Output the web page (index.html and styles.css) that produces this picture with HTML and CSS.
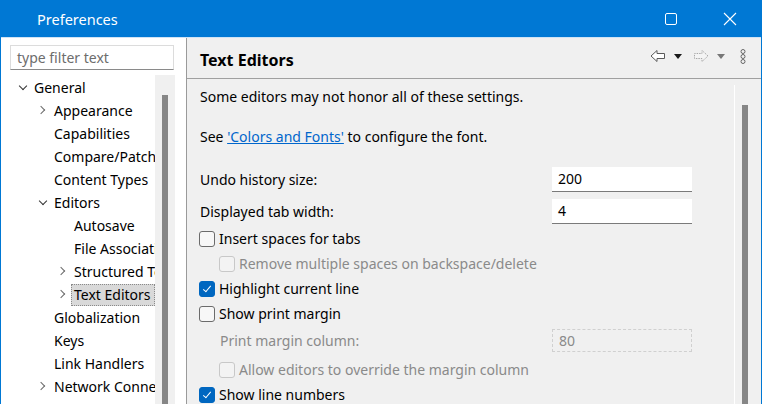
FILE: index.html
```html
<!DOCTYPE html>
<html>
<head>
<meta charset="utf-8">
<link rel="stylesheet" href="styles.css">
</head>
<body>
<div class="window">
  <div class="titlebar">
    <span class="title">Preferences</span>
    <div class="winbtns">
      <span class="winbtn"><svg width="12" height="12" viewBox="0 0 12 12"><rect x="0.5" y="0.5" width="11" height="11" rx="1.5" fill="none" stroke="#fff" stroke-width="1"/></svg></span>
      <span class="winbtn"><svg width="14" height="14" viewBox="0 0 14 14"><path d="M1 1L13 13M13 1L1 13" stroke="#fff" stroke-width="1.1" fill="none"/></svg></span>
    </div>
  </div>
  <div class="main">
    <aside class="left">
      <div class="filter">type filter text</div>
      <div class="treewrap">
        <ul class="tree">
          <li class="l0"><span class="tw open"></span>General</li>
          <li class="l1"><span class="tw closed"></span>Appearance</li>
          <li class="l1"><span class="tw"></span>Capabilities</li>
          <li class="l1"><span class="tw"></span>Compare/Patch</li>
          <li class="l1"><span class="tw"></span>Content Types</li>
          <li class="l1"><span class="tw open"></span>Editors</li>
          <li class="l2"><span class="tw"></span>Autosave</li>
          <li class="l2"><span class="tw"></span>File Associations</li>
          <li class="l2"><span class="tw closed"></span>Structured Text Editors</li>
          <li class="l2"><span class="tw closed"></span><span class="sel">Text Editors</span></li>
          <li class="l1"><span class="tw"></span>Globalization</li>
          <li class="l1"><span class="tw"></span>Keys</li>
          <li class="l1"><span class="tw"></span>Link Handlers</li>
          <li class="l1"><span class="tw closed"></span>Network Connections</li>
        </ul>
        <div class="tscroll"><div class="tthumb"></div></div>
      </div>
    </aside>
    <section class="right">
      <header class="phead">
        <h1>Text Editors</h1>
        <div class="nav">
          <svg class="ico" width="16" height="14" viewBox="0 0 16 14"><path d="M1 7L7 1.5V4.5H14.5V9.5H7V12.5Z" fill="#fff" stroke="#5a5a5a" stroke-width="1" stroke-linejoin="round"/></svg>
          <svg class="tri" width="8" height="5" viewBox="0 0 8 5"><path d="M0 0H8L4 5Z" fill="#1a1a1a"/></svg>
          <svg class="ico" width="16" height="14" viewBox="0 0 16 14"><path d="M15 7L9 1.5V4.5H1.5V9.5H9V12.5Z" fill="#f4f4f4" stroke="#a8a8a8" stroke-width="1" stroke-dasharray="1.5 1" stroke-linejoin="round"/></svg>
          <svg class="tri" width="8" height="5" viewBox="0 0 8 5"><path d="M0 0H8L4 5Z" fill="#777"/></svg>
          <svg class="dots" width="6" height="15" viewBox="0 0 6 15"><circle cx="3" cy="2.5" r="2" fill="none" stroke="#666" stroke-width="1"/><circle cx="3" cy="7.5" r="2" fill="none" stroke="#666" stroke-width="1"/><circle cx="3" cy="12.5" r="2" fill="none" stroke="#666" stroke-width="1"/></svg>
        </div>
      </header>
      <div class="pbody">
        <div class="content">
          <p class="line">Some editors may not honor all of these settings.</p>
          <p class="line gap">See <a class="link">'Colors and Fonts'</a> to configure the font.</p>
          <div class="field first"><span>Undo history size:</span><span class="input">200</span></div>
          <div class="field"><span>Displayed tab width:</span><span class="input">4</span></div>
          <div class="cb"><span class="box"></span>Insert spaces for tabs</div>
          <div class="cb sub dis"><span class="box"></span>Remove multiple spaces on backspace/delete</div>
          <div class="cb"><span class="box on"></span>Highlight current line</div>
          <div class="cb"><span class="box"></span>Show print margin</div>
          <div class="field sub dis pm"><span>Print margin column:</span><span class="input off">80</span></div>
          <div class="cb sub dis allow"><span class="box"></span>Allow editors to override the margin column</div>
          <div class="cb"><span class="box on"></span>Show line numbers</div>
        </div>
        <div class="rscroll"><div class="rthumb"></div></div>
      </div>
    </section>
  </div>
</div>
</body>
</html>
```

FILE: styles.css
```css
* { box-sizing: border-box; }
html, body { margin: 0; padding: 0; }
body {
  width: 762px;
  height: 404px;
  overflow: hidden;
  font-family: "Noto Sans", "Open Sans", sans-serif;
  font-size: 14px;
  color: #000;
}
.window {
  width: 762px;
  height: 404px;
  border-left: 1px solid #0078d4;
  border-right: 1px solid #0078d4;
  display: flex;
  flex-direction: column;
  overflow: hidden;
  background: #f0f0f0;
}
.titlebar {
  height: 38px;
  flex: none;
  background: #0078d4;
  display: flex;
  align-items: center;
  justify-content: space-between;
  color: #fff;
  border-bottom: 1px solid #cfe3f5;
}
.title { padding-left: 36px; font-size: 14.5px; }
.winbtns { display: flex; height: 100%; }
.winbtn {
  width: 58px;
  display: flex;
  align-items: center;
  justify-content: center;
}
.winbtn:first-child { padding-right: 2px; }
.winbtn:last-child { width: 60px; padding-right: 2px; }
.main { flex: 1; display: flex; min-height: 0; }
.left {
  width: 186px;
  flex: none;
  background: #fff;
  border-right: 1px solid #9a9a9a;
  padding: 7px 0 0 9px;
  display: flex;
  flex-direction: column;
}
.filter {
  width: 164px;
  height: 25px;
  border: 1px solid #dcdcdc;
  border-bottom: 1px solid #8a8a8a;
  color: #6d6d6d;
  padding-left: 6px;
  line-height: 24px;
}
.treewrap {
  margin-top: 6px;
  margin-left: -9px;
  display: flex;
  flex: 1;
  min-height: 0;
}
.tree {
  list-style: none;
  margin: 0;
  padding: 0;
  width: 154px;
  overflow: hidden;
  white-space: nowrap;
}
.tree li {
  height: 23px;
  line-height: 23px;
  display: flex;
  align-items: center;
}
.tree .l0 { padding-left: 16px; }
.tree .l1 { padding-left: 36px; }
.tree .l2 { padding-left: 56px; }
.tw {
  width: 17px;
  height: 23px;
  flex: none;
  position: relative;
}
.tw.closed::before, .tw.open::before {
  content: "";
  position: absolute;
  width: 5px;
  height: 5px;
  border-right: 1.3px solid #6a6a6a;
  border-bottom: 1.3px solid #6a6a6a;
}
.tw.closed::before { left: 1px; top: 8px; transform: rotate(-45deg); }
.tw.open::before { left: 3px; top: 7px; transform: rotate(45deg); border-color: #333; }
.sel {
  background: #d9d9d9;
  outline: 1px dotted #8a8a8a;
  outline-offset: -1px;
  padding: 0 4px 0 3px;
  margin-left: -3px;
  line-height: 22px;
}
.tscroll {
  width: 20px;
  flex: none;
  background: #f0f0f0;
  padding: 20px 0 0 7px;
  margin-top: -1px;
}
.tthumb { width: 6px; height: 400px; background: #868686; }
.right { flex: 1; display: flex; flex-direction: column; min-width: 0; }
.phead {
  height: 41px;
  flex: none;
  border-bottom: 1px solid #a0a0a0;
  display: flex;
  align-items: center;
  justify-content: space-between;
  padding: 0 15px 0 13px;
}
.phead h1 { margin: 4px 0 0; font-size: 16px; font-weight: 700; }
.nav { display: flex; align-items: center; margin-top: -4px; }
.nav .ico { margin-right: 8px; }
.nav .tri:nth-of-type(2) { margin-right: 11px; }
.nav .tri:nth-of-type(4) { margin-right: 15px; }
.pbody { flex: 1; display: flex; min-height: 0; }
.content { flex: 1; padding: 8px 0 0 13px; white-space: nowrap; }
.line { margin: 0; height: 20px; line-height: 20px; }
.line.gap { margin-top: 20px; }
.link { color: #0066cc; text-decoration: underline; }
.field {
  display: flex;
  align-items: center;
  height: 25px;
}
.field.first { margin-top: 20px; }
.field + .field { margin-top: 7px; }
.field > span:first-child { width: 352px; }
.input {
  width: 140px;
  height: 25px;
  background: #fff;
  border-bottom: 1px solid #7a7a7a;
  padding-left: 6px;
  line-height: 24px;
}
.input.off {
  background: transparent;
  border: 1px dashed #d0d0d0;
  color: #8a8a8a;
  height: 23px;
  line-height: 21px;
}
.field.pm { margin-top: 3px; height: 23px; }
.field.pm > span:first-child { width: 332px; }
.cb { display: flex; align-items: center; height: 25px; }
.field + .cb { margin-top: 2px; }
.cb.allow { margin-top: 5px; }
.sub { padding-left: 20px; }
.dis { color: #8a8a8a; }
.box {
  width: 16px;
  height: 16px;
  border: 1px solid #6b6b6b;
  border-radius: 3px;
  background: #f7f7f7;
  margin: 0 4px 0 -1px;
  flex: none;
  position: relative;
}
.dis .box { border-color: #c8c8c8; background: #f3f3f3; }
.box.on { background: #0067c0; border-color: #0067c0; }
.box.on::after {
  content: "";
  position: absolute;
  left: 5px;
  top: 2px;
  width: 3px;
  height: 7px;
  border-right: 1.2px solid #fff;
  border-bottom: 1.2px solid #fff;
  transform: rotate(40deg);
}
.rscroll {
  width: 27px;
  flex: none;
  border-left: 1px solid #fff;
  margin-top: 6px;
  padding: 20px 0 0 7px;
}
.rthumb { width: 6px; height: 400px; background: #868686; }
```
